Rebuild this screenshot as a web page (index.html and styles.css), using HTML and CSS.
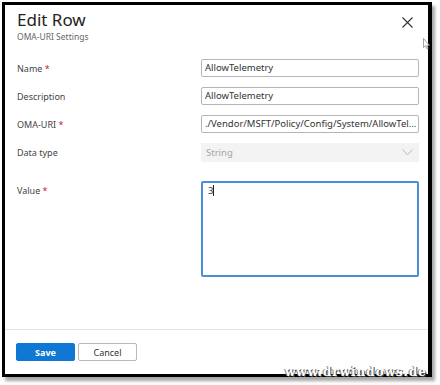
FILE: index.html
```html
<!DOCTYPE html>
<html lang="en">
<head>
  <meta charset="UTF-8" />
  <title>Edit Row</title>
  <link rel="stylesheet" href="styles.css">
</head>
<body>
  <div class="frame">
    <div class="header">
      <div>
        <h1>Edit Row</h1>
        <div class="subtitle">OMA-URI Settings</div>
      </div>
      <svg class="close" width="11" height="11" viewBox="0 0 11 11">
        <path d="M0.5 0.5 L10.5 10.5 M10.5 0.5 L0.5 10.5" stroke="#333" stroke-width="1.1" fill="none"/>
      </svg>
    </div>

    <div class="content">
      <div class="field">
        <label>Name <span class="req">*</span></label>
        <div class="input">AllowTelemetry</div>
      </div>
      <div class="field">
        <label>Description</label>
        <div class="input">AllowTelemetry</div>
      </div>
      <div class="field">
        <label>OMA-URI <span class="req">*</span></label>
        <div class="input">./Vendor/MSFT/Policy/Config/System/AllowTel...</div>
      </div>
      <div class="field">
        <label>Data type</label>
        <div class="select">
          <span>String</span>
          <svg width="11" height="7" viewBox="0 0 11 7">
            <path d="M0.5 0.5 L5.5 5.8 L10.5 0.5" stroke="#b8b8b8" stroke-width="1" fill="none"/>
          </svg>
        </div>
      </div>
      <div class="field field-top">
        <label>Value <span class="req">*</span></label>
        <div class="textarea">3<span class="caret"></span></div>
      </div>
    </div>

    <div class="footer">
      <button class="save">Save</button>
      <button class="cancel">Cancel</button>
    </div>

    <svg class="pointer" width="7" height="12" viewBox="0 0 7 12">
      <path d="M0.5 0.5 L0.5 9.5 L2.5 7.8 L4 11 L5.2 10.4 L3.8 7.3 L6.5 7.3 Z" fill="#fff" stroke="#8a8a8a" stroke-width="0.8"/>
    </svg>
  </div>
  <div class="watermark">www.drwindows.de</div>
</body>
</html>
```

FILE: styles.css
```css
body {
  margin: 0;
  background: #fff;
  font-family: 'Segoe UI', 'Noto Sans', 'Open Sans', sans-serif;
  color: #333;
  position: relative;
  width: 440px;
  height: 385px;
  overflow: hidden;
}
.frame {
  position: relative;
  margin: 2px 0 0 2px;
  width: 430px;
  height: 375px;
  box-sizing: border-box;
  border: 3px solid #000;
  border-right-width: 4px;
  background: #fff;
  box-shadow: 3px 4px 3px rgba(0, 0, 0, 0.35);
  display: flex;
  flex-direction: column;
}
.header {
  display: flex;
  justify-content: space-between;
  padding: 4px 15px 0 12px;
}
h1 {
  margin: 0;
  font-size: 17px;
  font-weight: 400;
  line-height: 22px;
  color: #222;
}
.subtitle {
  font-size: 8.5px;
  line-height: 12px;
  color: #666;
}
.close {
  margin-top: 8px;
}
.content {
  flex: 1;
  padding: 16px 9px 0 12px;
}
.field {
  display: grid;
  grid-template-columns: 184px 1fr;
  align-items: center;
  margin-bottom: 10px;
}
.field-top {
  align-items: start;
  margin-top: 19px;
}
label {
  font-size: 9px;
  color: #444;
}
.field-top label {
  padding-top: 3px;
}
.req {
  color: #c4262e;
}
.input {
  height: 18px;
  box-sizing: border-box;
  border: 1px solid #b5b5b5;
  border-radius: 2px;
  padding: 0 3px;
  font-size: 9.5px;
  line-height: 16px;
  color: #333;
  white-space: nowrap;
  overflow: hidden;
}
.select {
  height: 19px;
  box-sizing: border-box;
  background: #f3f3f3;
  padding: 0 6px 0 5px;
  font-size: 9.5px;
  color: #a6a6a6;
  display: flex;
  align-items: center;
  justify-content: space-between;
}
.textarea {
  height: 96px;
  box-sizing: border-box;
  border: 2px solid #4a90d9;
  border-radius: 2px;
  padding: 2px 5px;
  font-size: 9.5px;
  line-height: 12px;
  color: #333;
}
.caret {
  display: inline-block;
  width: 1px;
  height: 11px;
  background: #222;
  vertical-align: -2px;
}
.footer {
  border-top: 1px solid #e3e3e3;
  padding: 13px 11px 13px;
  display: flex;
  gap: 3px;
}
button {
  width: 59px;
  height: 18px;
  box-sizing: border-box;
  font-family: inherit;
  font-size: 9px;
  border-radius: 2px;
  padding: 0;
}
.save {
  background: #0f78d4;
  border: 1px solid #0f78d4;
  color: #fff;
  font-weight: 700;
}
.cancel {
  background: #fff;
  border: 1px solid #b8b8b8;
  color: #333;
}
.pointer {
  position: absolute;
  top: 33px;
  right: -2px;
}
.watermark {
  position: absolute;
  left: 285px;
  top: 365px;
  font-family: 'DejaVu Serif', serif;
  font-weight: 700;
  font-size: 12px;
  letter-spacing: 1px;
  color: #fff;
  text-shadow: 1px 1px 0 #444, -1px 0 0 #777;
}
```
